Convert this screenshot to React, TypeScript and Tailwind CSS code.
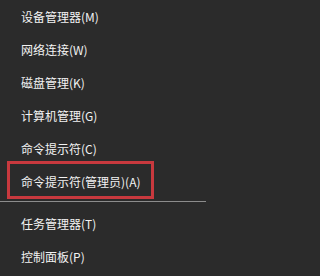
const font = { fontFamily: '"Noto Sans CJK SC", "Noto Sans", sans-serif' }

export default function App() {
  return (
    <div className="w-full min-h-screen bg-[#2b2b2b] text-[#f2f2f2] text-[12px] leading-none flex flex-col overflow-hidden" style={font}>
      <div className="h-[33px] flex items-center pl-[21px]">设备管理器(M)</div>
      <div className="h-[33px] flex items-center pl-[21px]">网络连接(W)</div>
      <div className="h-[33px] flex items-center pl-[21px]">磁盘管理(K)</div>
      <div className="h-[33px] flex items-center pl-[21px]">计算机管理(G)</div>
      <div className="h-[29px] flex items-center pl-[21px] pt-[5px]">命令提示符(C)</div>
      {/* highlighted item */}
      <div className="ml-[7px] w-[147px] h-[38px] border-[3px] border-[#c8393e] flex items-center pl-[11px] pt-[3px]">
        命令提示符(管理员)(A)
      </div>
      <div className="h-[8px] pt-[2px]">
        <div className="w-[206px] h-px bg-[#8c8c8c]" />
      </div>
      <div className="h-[33px] flex items-center pl-[21px]">任务管理器(T)</div>
      <div className="h-[33px] flex items-center pl-[21px]">控制面板(P)</div>
    </div>
  )
}
